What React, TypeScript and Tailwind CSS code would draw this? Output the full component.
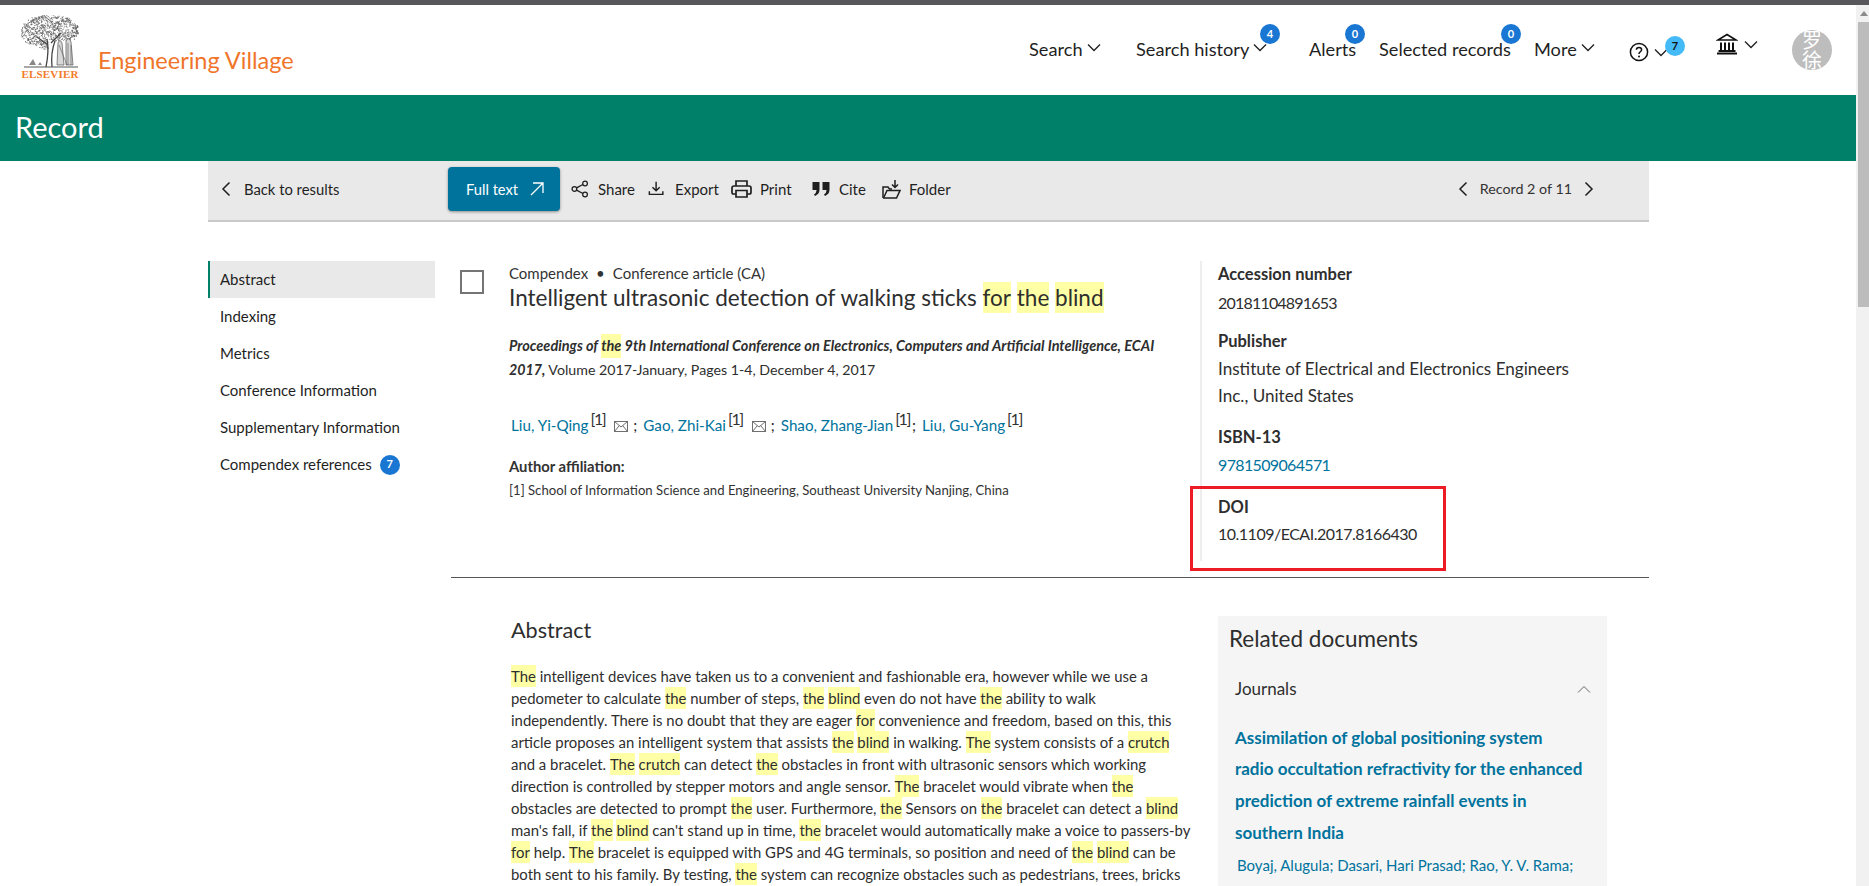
import React from "react";

const sans = "[font-family:Lato,'Noto_Sans',sans-serif]";

function treeStrokes() {
  let seed = 7;
  const r = () => {
    seed = (seed * 16807) % 2147483647;
    return seed / 2147483647;
  };
  let d = "";
  for (let i = 0; i < 720; i++) {
    const a = r() * 6.283;
    const q = Math.sqrt(r());
    const x = 29 + Math.cos(a) * q * 29;
    const y = 17 + Math.sin(a) * q * 17;
    if (y > 26 && x > 28) continue;
    const t = r() * 6.283;
    d += `M${x.toFixed(1)} ${y.toFixed(1)}l${(Math.cos(t) * 1.5).toFixed(1)} ${(Math.sin(t) * 1.5).toFixed(1)}`;
  }
  return d;
}
const TREE = treeStrokes();

function Logo() {
  return (
    <div className="flex flex-col items-center w-[58px]">
      <svg width="58" height="54" viewBox="0 0 58 54" fill="none" className="block">
        <path d={TREE} stroke="#555" strokeWidth="0.7" />
        <path d="M25 52 C27 42 28 34 26 24 M31 52 C30 42 31 34 34 26 M27 30 L16 22 M30 28 L40 18" stroke="#444" strokeWidth="1.3" />
        <path d="M36 50 L37 28 Q39 23 41 28 L43 50Z M45 50 L45 26 Q48 21 50 27 L52 50Z" fill="#d8d8d8" stroke="#555" strokeWidth="0.7" />
        <path d="M38 30 L46 50 M47 28 L47 50 M50 30 L50 50" stroke="#555" strokeWidth="0.6" />
        <path d="M8 50 L12 44 L15 50Z M17 50 L19 47 L21 50Z" fill="#888" />
        <path d="M3 52 H57" stroke="#555" strokeWidth="1" />
      </svg>
      <span className="text-[#f47a2a] text-[11px] leading-[12px] mt-[-1px] font-bold tracking-[0.2px] whitespace-nowrap [font-family:'Liberation_Serif',serif]">ELSEVIER</span>
    </div>
  );
}

function Chev({ dir = "down", className = "", light = false }: { dir?: "down" | "up" | "left" | "right"; className?: string; light?: boolean }) {
  if (dir === "left" || dir === "right")
    return (
      <svg width="10" height="16" viewBox="0 0 10 16" fill="none" stroke="#1f1f1f" strokeWidth="1.5" className={className}>
        <path d={dir === "left" ? "M8.5 1.5 L2 8 L8.5 14.5" : "M1.5 1.5 L8 8 L1.5 14.5"} />
      </svg>
    );
  return (
    <svg width="14" height="9" viewBox="0 0 14 9" fill="none" stroke={light ? "#666" : "#1f1f1f"} strokeWidth={light ? 1 : 1.3} className={className}>
      <path d={dir === "up" ? "M1 7.5 L7 1.5 L13 7.5" : "M1 1.5 L7 7.5 L13 1.5"} />
    </svg>
  );
}

function Badge({ n, className }: { n: string; className: string }) {
  return (
    <span className={`absolute w-[20px] h-[20px] rounded-full flex items-center justify-center text-[11px] font-bold ${className}`}>{n}</span>
  );
}

function NavItem({ label, w, chev, badge, badgeX }: { label: string; w: string; chev?: boolean; badge?: string; badgeX?: string }) {
  return (
    <div className={`relative flex items-center h-[30px] shrink-0 ${w}`}>
      <span className="text-[18.2px] text-[#1f1f1f] whitespace-nowrap">{label}</span>
      {chev && <Chev className="ml-[4px] mb-[5px]" />}
      {badge && <Badge n={badge} className={`top-[-11px] bg-[#1976d2] text-white ${badgeX}`} />}
    </div>
  );
}

function Header() {
  return (
    <header className="h-[90px] flex items-start bg-white">
      <div className="ml-[21px] mt-[10px]"><Logo /></div>
      <span className="ml-[19px] mt-[41px] text-[23.5px] leading-[28px] text-[#f0752a] whitespace-nowrap w-[931px]">Engineering Village</span>
      <div className="mt-[25px] flex items-center">
        <NavItem label="Search" w="w-[107px]" chev />
        <NavItem label="Search history" w="w-[173px]" chev badge="4" badgeX="left-[124px]" />
        <NavItem label="Alerts" w="w-[70px]" badge="0" badgeX="left-[36px]" />
        <NavItem label="Selected records" w="w-[155px]" badge="0" badgeX="left-[122px]" />
        <NavItem label="More" w="w-[95px]" chev />
        <div className="relative flex items-center w-[87px] h-[30px]">
          <svg width="20" height="20" viewBox="0 0 20 20" fill="none" className="mt-[4px]">
            <circle cx="10" cy="10" r="8.6" stroke="#111" strokeWidth="1.5" />
            <path d="M7.4 7.8 C7.4 4.8 12.6 4.8 12.6 7.8 C12.6 9.8 10 9.8 10 12" stroke="#111" strokeWidth="1.5" />
            <circle cx="10" cy="14.6" r="1" fill="#111" />
          </svg>
          <Chev className="ml-[5px] mt-[5px]" />
          <Badge n="7" className="left-[36px] top-[1px] bg-[#44baf7] text-[#111]" />
        </div>
        <div className="flex items-center w-[76px] h-[30px] mt-[-12px]">
          <svg width="22" height="22" viewBox="0 0 22 22" fill="none" stroke="#111" strokeWidth="1.6">
            <path d="M11 1.5 L20 7 H2 Z" />
            <path d="M5 9.5 V17 M9 9.5 V17 M13 9.5 V17 M17 9.5 V17" strokeWidth="2" />
            <path d="M2.5 18 H19.5 M1 20.5 H21" strokeWidth="2" />
          </svg>
          <Chev className="ml-[6px]" />
        </div>
        <div className="w-[40px] h-[40px] rounded-full bg-[#bdbdbd] overflow-hidden flex flex-col items-center justify-center text-white text-[20px] leading-[20px] [font-family:'Noto_Sans_CJK_SC',sans-serif]">
          <span>罗</span>
          <span>徐</span>
        </div>
      </div>
    </header>
  );
}

const ico = { width: 20, height: 20, viewBox: "0 0 20 20", fill: "none", stroke: "#1f1f1f", strokeWidth: 1.4 };

function ToolItem({ icon, label, w, iw = "w-[27px]" }: { icon: React.ReactNode; label: string; w: string; iw?: string }) {
  return (
    <div className={`flex items-center shrink-0 ${w}`}>
      <span className={`shrink-0 flex items-center ${iw}`}>{icon}</span>
      <span className="text-[15px] text-[#1f1f1f] whitespace-nowrap">{label}</span>
    </div>
  );
}

function Toolbar() {
  return (
    <div className="h-[61px] pb-[3px] bg-[#e9e9e9] border-b-2 border-[#c9c9c9] flex items-center">
      <div className="w-[240px] pl-[13px] flex items-center shrink-0">
        <Chev dir="left" />
        <span className="ml-[13px] text-[14.8px] text-[#1f1f1f] whitespace-nowrap">Back to results</span>
      </div>
      <div className="w-[112px] h-[44px] rounded-[4px] bg-[#00739d] shadow-[0_1px_3px_rgba(0,0,0,0.4)] flex items-center pl-[18px] shrink-0">
        <span className="text-[14.7px] text-white w-[64px] whitespace-nowrap">Full text</span>
        <svg width="14" height="14" viewBox="0 0 14 14" fill="none" stroke="#fff" strokeWidth="1.3">
          <path d="M1 13 L13 1 M3 1 H13 V11" />
        </svg>
      </div>
      <div className="ml-[11px] flex items-center">
        <ToolItem label="Share" w="w-[77px]" icon={
          <svg {...ico} width="18" height="18">
            <circle cx="3.8" cy="10" r="2.6" /><circle cx="15.6" cy="3.8" r="2.6" /><circle cx="15.6" cy="16.2" r="2.6" />
            <path d="M6.2 8.8 L13.2 5 M6.2 11.2 L13.2 15" />
          </svg>} />
        <ToolItem label="Export" w="w-[83px]" icon={
          <svg {...ico} width="18" height="18">
            <path d="M9 2 V12 M5 8 L9 12 L13 8" strokeWidth="1.6" />
            <path d="M1.5 12.5 V16 H16.5 V12.5" strokeWidth="1.6" />
          </svg>} />
        <ToolItem label="Print" w="w-[81px]" iw="w-[29px]" icon={
          <svg {...ico} width="21" height="20" viewBox="0 0 21 20">
            <path d="M5 7 V2 H16 V7" strokeWidth="1.7" />
            <path d="M5 15 H2.5 Q1 15 1 13 V9 Q1 7 3 7 H18 Q20 7 20 9 V13 Q20 15 18.5 15 H16" strokeWidth="1.7" />
            <path d="M5 11.5 H16 V18 H5 Z" strokeWidth="1.7" />
          </svg>} />
        <ToolItem label="Cite" w="w-[70px]" icon={
          <svg width="18" height="16" viewBox="0 0 18 16" fill="#1f1f1f">
            <path d="M0.5 1 H7.5 V8.5 Q7.5 13 3 15 L2 13.4 Q4.5 12 4.6 9 H0.5 Z" />
            <path d="M10.5 1 H17.5 V8.5 Q17.5 13 13 15 L12 13.4 Q14.5 12 14.6 9 H10.5 Z" />
          </svg>} />
        <ToolItem label="Folder" w="w-[70px]" icon={
          <svg {...ico} width="19" height="20" viewBox="0 0 19 20" strokeWidth="1.5">
            <path d="M1 19 V8 H6 L7.5 10 H10" />
            <path d="M1 19 H14.5 L18 11.5 H5 L2 18" />
            <path d="M13 1 V8 M10 5.5 L13 8.5 L16 5.5" />
          </svg>} />
      </div>
      <div className="ml-auto flex items-center pr-[55px]">
        <Chev dir="left" />
        <span className="mx-[12px] text-[14.3px] text-[#333] whitespace-nowrap">Record 2 of 11</span>
        <Chev dir="right" />
      </div>
    </div>
  );
}

function SideNav() {
  const items = ["Abstract", "Indexing", "Metrics", "Conference Information", "Supplementary Information"];
  return (
    <nav className="w-[227px] mt-[39px] shrink-0">
      {items.map((t, i) => (
        <div key={t} className={`h-[37px] flex items-center text-[15px] text-[#1f1f1f] ${i === 0 ? "bg-[#e9e9e9] border-l-2 border-[#007f69] pl-[10px]" : "pl-[12px]"}`}>{t}</div>
      ))}
      <div className="h-[37px] flex items-center pl-[12px] text-[15px] text-[#1f1f1f]">
        Compendex references
        <span className="ml-[8px] w-[20px] h-[20px] rounded-full bg-[#1976d2] text-white text-[11px] font-bold flex items-center justify-center">7</span>
      </div>
    </nav>
  );
}

function Hl({ text, cls = "" }: { text: string; cls?: string }) {
  return (
    <>
      {text.split(/(\{[^}]+\})/).map((s, i) =>
        s.startsWith("{") ? (
          <mark key={i} className={`bg-[#ffffa6] text-inherit inline-block ${cls}`}>{s.slice(1, -1)}</mark>
        ) : (
          <span key={i}>{s}</span>
        )
      )}
    </>
  );
}

function Mail() {
  return (
    <svg width="14" height="11" viewBox="0 0 14 11" fill="none" stroke="#6f6f6f" strokeWidth="1" className="inline-block ml-[7px] mr-[5px] align-[-1px]">
      <rect x="0.5" y="0.5" width="13" height="10" />
      <path d="M0.5 0.5 L7 6 L13.5 0.5 M0.5 10.5 L5.3 4.6 M13.5 10.5 L8.7 4.6" />
    </svg>
  );
}

function Author({ name }: { name: string }) {
  return (
    <>
      <span className="text-[#00739d]">{name}</span>
      <span className="relative top-[-6px] text-[16px] tracking-[-1.4px] ml-[2px] mr-[2px] text-[#333]">[1]</span>
    </>
  );
}

function Record() {
  return (
    <section className="h-[355px] flex border-b border-[#555] box-content">
      <div className="pl-[9px] pt-[48px] w-[58px] shrink-0">
        <div className="w-[24px] h-[24px] border-2 border-[#757575]" />
      </div>
      <div className="w-[691px] shrink-0 pt-[41px]">
        <div className="text-[15px] leading-[20px] text-[#333]">Compendex<span className="mx-[8px]">•</span>Conference article (CA)</div>
        <h1 className="text-[22.5px] leading-[31px] text-[#2e2e2e] whitespace-nowrap mt-[-1px]">
          <Hl text="Intelligent ultrasonic detection of walking sticks {for} {the} {blind}" />
        </h1>
        <div className="mt-[21px] leading-[24px] text-[#2e2e2e] whitespace-nowrap">
          <div className="text-[14.5px] font-bold italic"><Hl text="Proceedings of {the} 9th International Conference on Electronics, Computers and Artificial Intelligence, ECAI" /></div>
          <div className="text-[14.2px]"><b className="italic">2017,</b> Volume 2017-January, Pages 1-4, December 4, 2017</div>
        </div>
        <div className="mt-[31px] ml-[2px] h-[24px] text-[15.2px] leading-[24px] whitespace-nowrap text-[#1f1f1f]">
          <Author name="Liu, Yi-Qing" /><Mail />;<span className="ml-[6px]" />
          <Author name="Gao, Zhi-Kai" /><Mail />;<span className="ml-[6px]" />
          <Author name="Shao, Zhang-Jian" />;<span className="ml-[6px]" />
          <Author name="Liu, Gu-Yang" />
        </div>
        <div className="mt-[19px] text-[14.8px] leading-[20px] font-bold text-[#333]">Author affiliation:</div>
        <div className="mt-[4px] text-[13.15px] leading-[20px] text-[#333] whitespace-nowrap">[1] School of Information Science and Engineering, Southeast University Nanjing, China</div>
      </div>
      <div className="relative w-[400px] mt-[39px] h-[300px] border-l-2 border-[#eeeeee] pl-[16px] text-[16px] leading-[27.5px] text-[#2e2e2e]">
        <div className="font-bold text-[16.5px]">Accession number</div>
        <div className="tracking-[-0.8px]">20181104891653</div>
        <div className="font-bold text-[16.5px] mt-[12px]">Publisher</div>
        <div className="whitespace-nowrap text-[17.1px] mt-[-1px]">Institute of Electrical and Electronics Engineers</div>
        <div className="text-[17.1px]">Inc., United States</div>
        <div className="font-bold text-[16.5px] mt-[14px]">ISBN-13</div>
        <div className="text-[#00739d] tracking-[-0.65px]">9781509064571</div>
        <div className="font-bold text-[16.5px] mt-[15px]">DOI</div>
        <div className="tracking-[-0.5px] mt-[-1px]">10.1109/ECAI.2017.8166430</div>
        <div className="absolute left-[-12px] top-[225px] w-[256px] h-[85px] border-[3px] border-[#ed1c24]" />
      </div>
    </section>
  );
}

const LINES = [
  "{The} intelligent devices have taken us to a convenient and fashionable era, however while we use a",
  "pedometer to calculate {the} number of steps, {the} {blind} even do not have {the} ability to walk",
  "independently. There is no doubt that they are eager {for} convenience and freedom, based on this, this",
  "article proposes an intelligent system that assists {the} {blind} in walking. {The} system consists of a {crutch}",
  "and a bracelet. {The} {crutch} can detect {the} obstacles in front with ultrasonic sensors which working",
  "direction is controlled by stepper motors and angle sensor. {The} bracelet would vibrate when {the}",
  "obstacles are detected to prompt {the} user. Furthermore, {the} Sensors on {the} bracelet can detect a {blind}",
  "man's fall, if {the} {blind} can't stand up in time, {the} bracelet would automatically make a voice to passers-by",
  "{for} help. {The} bracelet is equipped with GPS and 4G terminals, so position and need of {the} {blind} can be",
  "both sent to his family. By testing, {the} system can recognize obstacles such as pedestrians, trees, bricks",
];

function AbstractBody() {
  return (
    <section className="flex">
      <div className="w-[767px] pl-[60px] shrink-0 pt-[38px]">
        <h2 className="text-[21.6px] leading-[28px] text-[#2e2e2e]">Abstract</h2>
        <div className="mt-[21px] text-[14.9px] leading-[22px] text-[#2e2e2e] whitespace-nowrap">
          {LINES.map((l, i) => (
            <div key={i}><Hl text={l} /></div>
          ))}
        </div>
      </div>
      <aside className="w-[389px] mt-[38px] h-[300px] bg-[#f5f5f5] pl-[11px] pr-[16px] shrink-0">
        <h3 className="pt-[8px] text-[22.5px] leading-[30px] text-[#2e2e2e]">Related documents</h3>
        <div className="mt-[23px] ml-[6px] flex items-center justify-between text-[17px] leading-[24px] text-[#2e2e2e]">
          Journals
          <Chev dir="up" light />
        </div>
        <div className="mt-[21px] ml-[6px] text-[17px] leading-[32px] font-bold text-[#00739d] whitespace-nowrap">
          <div>Assimilation of global positioning system</div>
          <div className="mt-[-1px]">radio occultation refractivity for the enhanced</div>
          <div>prediction of extreme rainfall events in</div>
          <div>southern India</div>
        </div>
        <div className="mt-[4px] ml-[8px] text-[15px] leading-[24px] text-[#00739d] whitespace-nowrap">Boyaj, Alugula; Dasari, Hari Prasad; Rao, Y. V. Rama;</div>
      </aside>
    </section>
  );
}

function Scrollbar() {
  return (
    <div className="w-[13px] shrink-0 bg-[#f1f1f1] flex flex-col items-end">
      <div className="h-[17px] w-full flex items-center justify-end pr-[1px]">
        <span className="w-0 h-0 border-l-[4px] border-r-[4px] border-b-[5px] border-transparent border-b-[#8a8a8a]" />
      </div>
      <div className="w-[11px] h-[285px] bg-[#bcbcbc]" />
    </div>
  );
}

export default function App() {
  return (
    <div className={`w-full h-[886px] overflow-hidden flex flex-col bg-white ${sans}`}>
      <div className="h-[5px] bg-[#58585c] shrink-0" />
      <div className="flex flex-1 min-h-0">
        <main className="flex-1 min-w-0 overflow-hidden">
          <Header />
          <div className="h-[66px] pb-[3px] bg-[#007f69] flex items-center pl-[15px] text-[29px] text-white">Record</div>
          <div className="ml-[208px] w-[1441px]">
            <Toolbar />
            <div className="flex">
              <SideNav />
              <div className="ml-[16px] w-[1198px]">
                <Record />
                <AbstractBody />
              </div>
            </div>
          </div>
        </main>
        <Scrollbar />
      </div>
    </div>
  );
}
